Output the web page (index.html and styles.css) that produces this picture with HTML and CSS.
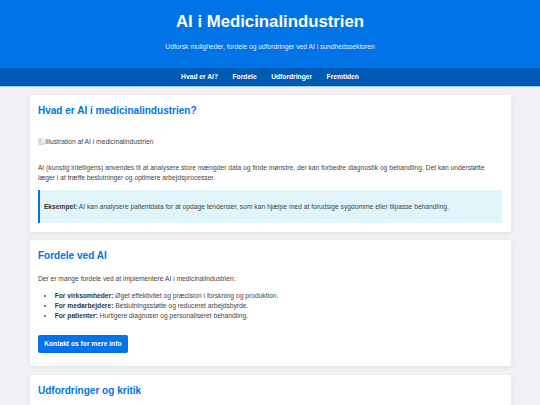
FILE: index.html
```html
<!DOCTYPE html>
<html lang="da">
<head>
<meta charset="utf-8">
<title>AI i Medicinalindustrien</title>
<link rel="stylesheet" href="styles.css">
</head>
<body>
<header class="site-header">
  <h1 class="site-title">AI i Medicinalindustrien</h1>
  <p class="site-tagline">Udforsk muligheder, fordele og udfordringer ved AI i sundhedssektoren</p>
</header>
<nav class="site-nav">
  <ul class="nav-list">
    <li><a class="nav-link" href="#hvad">Hvad er AI?</a></li>
    <li><a class="nav-link" href="#fordele">Fordele</a></li>
    <li><a class="nav-link" href="#udfordringer">Udfordringer</a></li>
    <li><a class="nav-link" href="#fremtiden">Fremtiden</a></li>
  </ul>
</nav>
<main class="content">
  <section class="card" id="hvad">
    <h2 class="card-title">Hvad er AI i medicinalindustrien?</h2>
    <div class="broken-img"><svg class="broken-icon" viewBox="0 0 16 16" width="7" height="7" aria-hidden="true"><path d="M1.5 1.5h10l3 3v4l-2 1.5-2-1.5-2 1.5-2-1.5-2 1.5-3-1.5z" fill="#fff" stroke="#9a9a9a"/><path d="M1.5 11.5l3 1.5 2-1.5 2 1.5 2-1.5 2 1.5 2-1.5v3h-13z" fill="#fff" stroke="#9a9a9a"/><circle cx="5" cy="5" r="1.3" fill="#6fae5f"/><path d="M3 8l3-2 3 2" fill="none" stroke="#4f8fd9" stroke-width="1"/></svg><span class="alt-text">Illustration af AI i medicinalindustrien</span></div>
    <p class="text">AI (kunstig intelligens) anvendes til at analysere store mængder data og finde mønstre, der kan forbedre diagnostik og behandling. Det kan understøtte læger i at træffe beslutninger og optimere arbejdsprocesser.</p>
    <div class="note"><p class="note-text"><strong>Eksempel:</strong> AI kan analysere patientdata for at opdage tendenser, som kan hjælpe med at forudsige sygdomme eller tilpasse behandling.</p></div>
  </section>
  <section class="card" id="fordele">
    <h2 class="card-title">Fordele ved AI</h2>
    <p class="text">Der er mange fordele ved at implementere AI i medicinalindustrien:</p>
    <ul class="list">
      <li><strong>For virksomheder:</strong> Øget effektivitet og præcision i forskning og produktion.</li>
      <li><strong>For medarbejdere:</strong> Beslutningsstøtte og reduceret arbejdsbyrde.</li>
      <li><strong>For patienter:</strong> Hurtigere diagnoser og personaliseret behandling.</li>
    </ul>
    <div class="actions"><a class="button" href="#kontakt">Kontakt os for mere info</a></div>
  </section>
  <section class="card" id="udfordringer">
    <h2 class="card-title">Udfordringer og kritik</h2>
  </section>
</main>
</body>
</html>
```

FILE: styles.css
```css
* { box-sizing: border-box; }

html, body { margin: 0; padding: 0; }

body {
  font-family: "Liberation Sans", Arial, sans-serif;
  font-size: 6.7px;
  line-height: 1.5;
  color: #444;
  background: #f0f0f5;
}

.site-header {
  background: #0073e6;
  color: #fff;
  text-align: center;
  padding: 8.6px 0 8.4px;
}

.site-title {
  margin: 0;
  font-size: 16.75px;
  line-height: 1.5;
  font-weight: bold;
}

.site-tagline {
  margin: 8.2px 0 7.4px;
  color: #e6f0fb;
}

.site-nav {
  background: #005bb5;
  padding: 4.3px 0;
  border-bottom: 1px solid #9fcdf0;
}

.nav-list {
  list-style: none;
  margin: 0;
  padding: 0;
  display: flex;
  justify-content: center;
  gap: 14.5px;
}

.nav-link {
  color: #fff;
  font-weight: bold;
  text-decoration: none;
}

.content {
  max-width: 481px;
  margin: 7.5px auto 0;
  display: flex;
  flex-direction: column;
  gap: 8.4px;
}

.card {
  background: #fff;
  border-radius: 2px;
  box-shadow: 0 1px 4px rgba(0, 0, 0, 0.08);
  padding: 8.2px 8.4px 8.6px;
}

.card-title {
  margin: 0 0 10.5px;
  font-size: 10.05px;
  line-height: 1.5;
  color: #0073e6;
  font-weight: bold;
}

.card-title:last-child { margin-bottom: 0; }

.broken-img {
  margin: 18.8px 0 16.4px;
  display: flex;
  align-items: center;
}

.broken-icon { flex: none; margin-right: 0.3px; }

.text { margin: 6.7px 0; }

.note {
  background: #e0f4fa;
  border-left: 2px solid #0073e6;
  padding: 11.5px 4px;
}

.note-text { margin: 0; }

.note strong, .list strong { color: #333; }

.list {
  margin: 6.7px 0;
  padding-left: 16.8px;
}

.actions {
  margin-top: 14px;
  margin-bottom: 4.3px;
  display: flex;
}

.button {
  display: inline-block;
  background: #0073e6;
  color: #fff;
  font-weight: bold;
  text-decoration: none;
  padding: 4.2px 6.3px;
  border-radius: 2px;
}
```
